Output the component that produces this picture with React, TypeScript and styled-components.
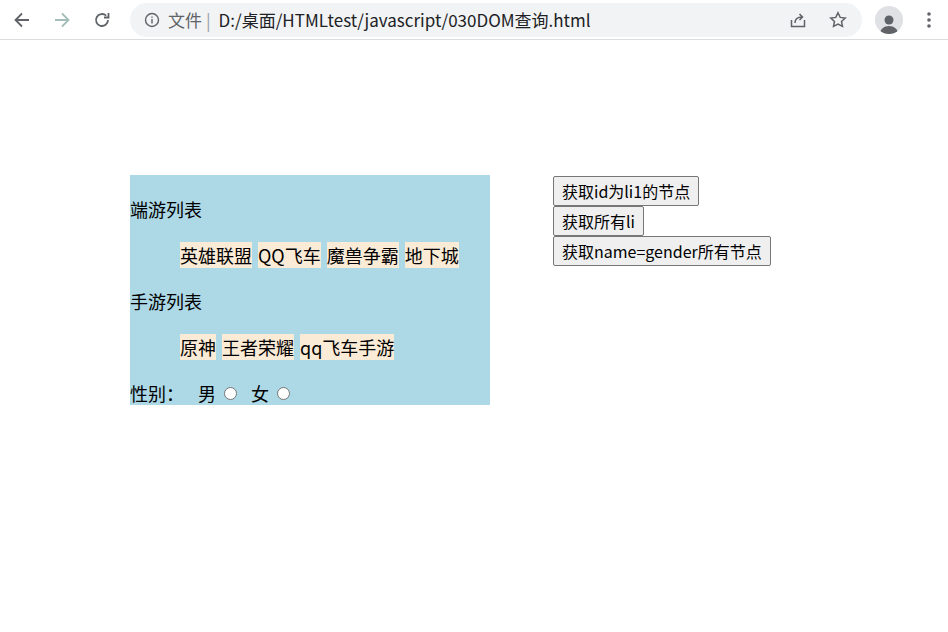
import { FC } from "react"
import styled, { createGlobalStyle } from "styled-components"

const Global = createGlobalStyle`
  body {
    margin: 0;
    font-family: "Noto Sans CJK SC", "Liberation Sans", sans-serif;
    background: #fff;
  }
`

const Toolbar = styled.div`
  height: 40px;
  border-bottom: 1px solid #dadce0;
  display: flex;
  align-items: center;
  padding-left: 10px;
  box-sizing: border-box;
`

const NavButton = styled.div<{ dim?: boolean }>`
  width: 24px;
  height: 24px;
  margin-right: 16px;
  display: flex;
  align-items: center;
  justify-content: center;
  color: ${({ dim }) => (dim ? "#a4bdb8" : "#5f6368")};
`

const Omnibox = styled.div`
  width: 732px;
  height: 34px;
  border-radius: 17px;
  background: #f1f3f4;
  display: flex;
  align-items: center;
  padding: 0 12px 0 14px;
  box-sizing: border-box;
  font-size: 17px;
  color: #202124;
  margin-left: 0;
`

const Scheme = styled.span`
  color: #5f6368;
  margin-left: 8px;
`

const Divider = styled.span`
  color: #9aa0a6;
  margin: 0 8px 0 4px;
`

const Url = styled.span`
  flex: 1;
`

const EndIcon = styled.div`
  width: 24px;
  height: 24px;
  margin-left: 16px;
  display: flex;
  align-items: center;
  justify-content: center;
  color: #5f6368;
`

const Avatar = styled.div`
  width: 28px;
  height: 28px;
  border-radius: 50%;
  background: #dfe1e5;
  margin-left: 13px;
  display: flex;
  align-items: flex-end;
  justify-content: center;
  overflow: hidden;
`

const Page = styled.div`
  display: flex;
  align-items: flex-start;
  padding: 135px 0 0 130px;
`

const GameBox = styled.div`
  width: 360px;
  height: 230px;
  background: lightblue;
  box-sizing: border-box;
  padding-top: 22px;
  display: flex;
  flex-direction: column;
  gap: 22px;
  font-size: 18px;
  color: #000;
`

const Row = styled.div<{ indent?: boolean }>`
  height: 24px;
  line-height: 24px;
  display: flex;
  align-items: center;
  gap: 6px;
  white-space: nowrap;
  padding-left: ${({ indent }) => (indent ? "50px" : "0")};
`

const Item = styled.span`
  background: antiquewhite;
  height: 26px;
  line-height: 26px;
`

const Radio = styled.span`
  display: inline-block;
  width: 11px;
  height: 11px;
  border: 1px solid #767676;
  border-radius: 50%;
  background: #fff;
  margin: 0 8px 0 2px;
`

const Buttons = styled.div`
  margin-left: 63px;
  padding-top: 1px;
  display: flex;
  flex-direction: column;
  align-items: flex-start;
`

const Btn = styled.button`
  height: 30px;
  font-family: "Noto Sans CJK SC", "Liberation Sans", sans-serif;
  font-size: 16px;
  padding: 0 8px;
  background: #efefef;
  border: 1px solid #767676;
  border-radius: 2px;
  color: #000;
  line-height: 28px;
`

const Back: FC = () => (
  <svg width="18" height="18" viewBox="0 0 18 18" fill="none" stroke="currentColor" strokeWidth="1.8">
    <path d="M16 9H3M9 2.5L2.5 9 9 15.5" />
  </svg>
)

const Fwd: FC = () => (
  <svg width="18" height="18" viewBox="0 0 18 18" fill="none" stroke="currentColor" strokeWidth="1.8">
    <path d="M2 9h13M9 2.5L15.5 9 9 15.5" />
  </svg>
)

const Reload: FC = () => (
  <svg width="18" height="18" viewBox="0 0 18 18" fill="none" stroke="currentColor" strokeWidth="1.8">
    <path d="M15 9a6 6 0 1 1-1.8-4.3" />
    <path d="M15.5 2v4.5H11" />
  </svg>
)

const Info: FC = () => (
  <svg width="16" height="16" viewBox="0 0 16 16" fill="none" stroke="#5f6368" strokeWidth="1.4">
    <circle cx="8" cy="8" r="6.5" />
    <path d="M8 7v4.5M8 4.5v1.2" />
  </svg>
)

const Share: FC = () => (
  <svg width="18" height="18" viewBox="0 0 18 18" fill="none" stroke="currentColor" strokeWidth="1.5">
    <path d="M2.5 9v6.5h13V9" />
    <path d="M6 12c0-4 3-6 7-6M10.5 3l3 3-3 3" />
  </svg>
)

const Star: FC = () => (
  <svg width="18" height="18" viewBox="0 0 18 18" fill="none" stroke="currentColor" strokeWidth="1.5">
    <path d="M9 1.8l2.2 4.6 5 .6-3.7 3.4 1 5L9 13l-4.5 2.4 1-5L1.8 7l5-.6z" />
  </svg>
)

const Dots: FC = () => (
  <svg width="6" height="18" viewBox="0 0 6 18" fill="#5f6368">
    <circle cx="3" cy="3" r="1.8" />
    <circle cx="3" cy="9" r="1.8" />
    <circle cx="3" cy="15" r="1.8" />
  </svg>
)

const pcGames = ["英雄联盟", "QQ飞车", "魔兽争霸", "地下城"]
const mobileGames = ["原神", "王者荣耀", "qq飞车手游"]

export default function App() {
  return (
    <>
      <Global />
      <Toolbar>
        <NavButton><Back /></NavButton>
        <NavButton dim><Fwd /></NavButton>
        <NavButton><Reload /></NavButton>
        <Omnibox>
          <Info />
          <Scheme>文件</Scheme>
          <Divider>|</Divider>
          <Url>D:/桌面/HTMLtest/javascript/030DOM查询.html</Url>
          <EndIcon><Share /></EndIcon>
          <EndIcon><Star /></EndIcon>
        </Omnibox>
        <Avatar>
          <svg width="20" height="22" viewBox="0 0 20 22" fill="#5f6368">
            <circle cx="10" cy="8" r="4.5" />
            <path d="M1 22c0-5 4-8 9-8s9 3 9 8z" />
          </svg>
        </Avatar>
        <EndIcon style={{ marginLeft: 14 }}><Dots /></EndIcon>
      </Toolbar>
      <Page>
        <GameBox>
          <Row>端游列表</Row>
          <Row indent>
            {pcGames.map((g) => <Item key={g}>{g}</Item>)}
          </Row>
          <Row>手游列表</Row>
          <Row indent>
            {mobileGames.map((g) => <Item key={g}>{g}</Item>)}
          </Row>
          <Row>
            性别：<span style={{ marginLeft: 8 }}>男</span><Radio />女<Radio />
          </Row>
        </GameBox>
        <Buttons>
          <Btn>获取id为li1的节点</Btn>
          <Btn>获取所有li</Btn>
          <Btn>获取name=gender所有节点</Btn>
        </Buttons>
      </Page>
    </>
  )
}
